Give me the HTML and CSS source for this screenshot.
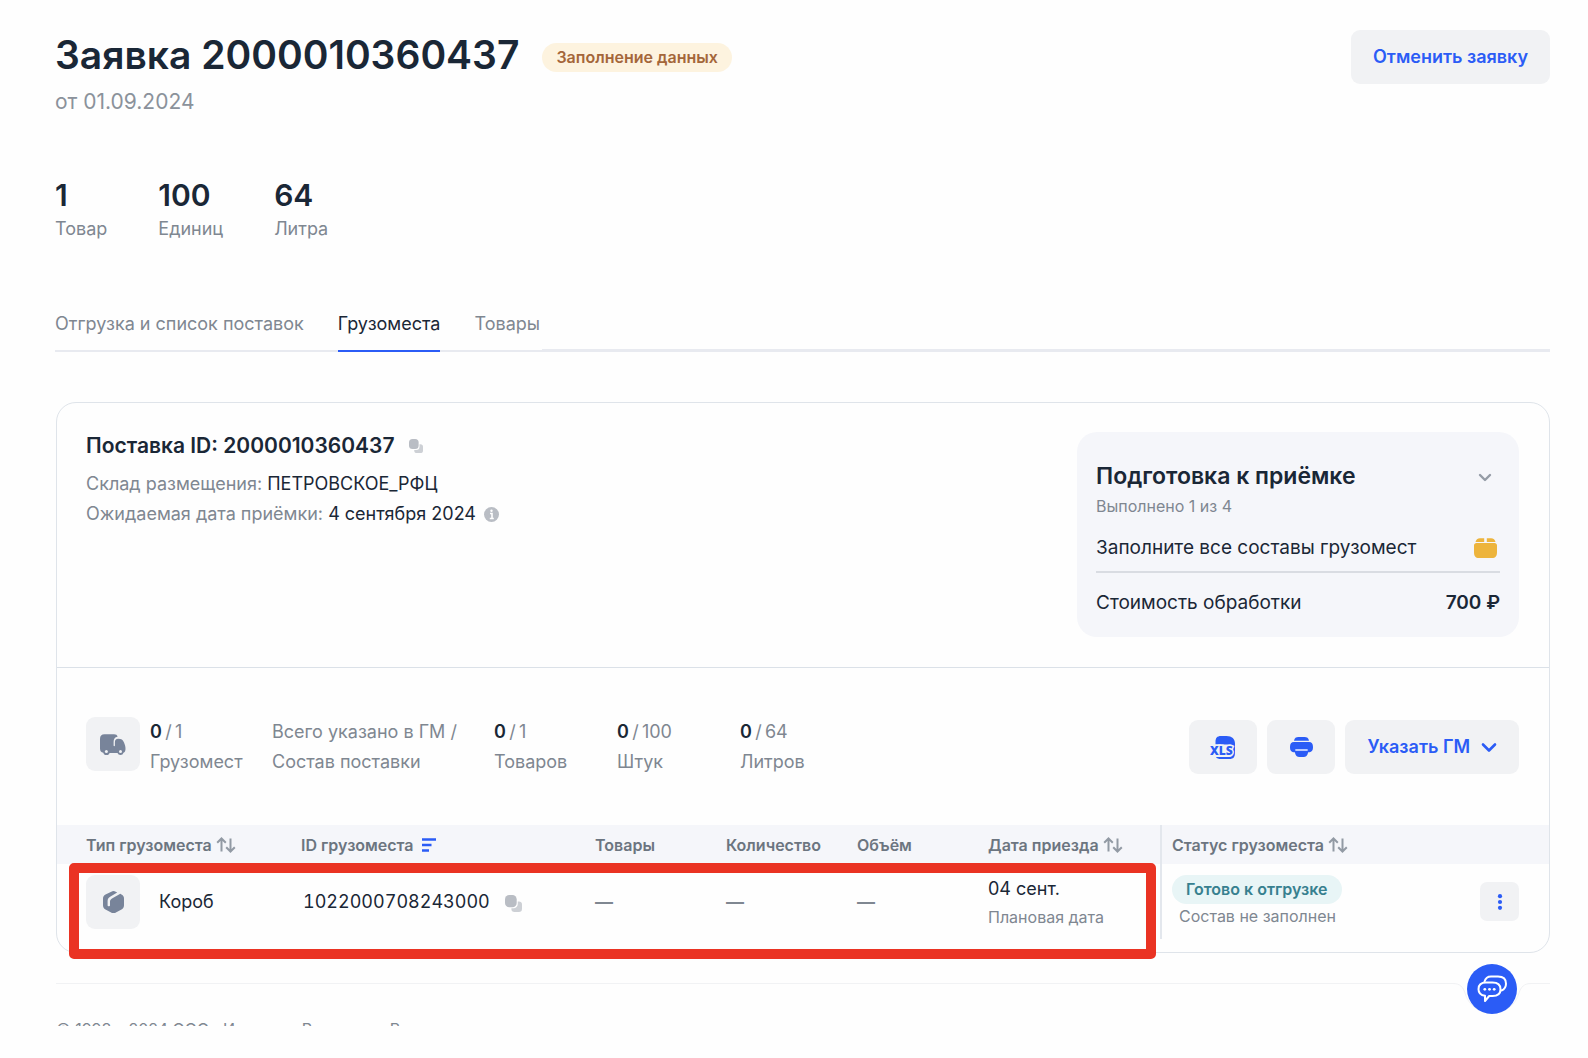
FILE: index.html
```html
<!DOCTYPE html>
<html lang="ru">
<head>
<meta charset="utf-8">
<meta name="viewport" content="width=device-width, initial-scale=1">
<title>Заявка 2000010360437</title>
<link rel="stylesheet" href="styles.css">
</head>
<body>
<svg class="sprite" aria-hidden="true">
  <symbol id="copy" viewBox="0 0 16 16">
    <rect x="6" y="6" width="10" height="10" rx="3" fill="#cdd0d5"/>
    <rect x="0" y="0" width="12" height="12.500" rx="4" fill="#fff"/>
    <rect x="0" y="0" width="11" height="11.500" rx="4" fill="#b9bdc4"/>
  </symbol>
  <symbol id="sort" viewBox="0 0 20 16">
    <path d="M5.500 14.500V2M1.200 5.800 5.500 1.500l4.300 4.300M14.500 1.500V14M10.200 10.200l4.300 4.300 4.300-4.300" fill="none" stroke="#929aa4" stroke-width="2"/>
  </symbol>
</svg>
<div class="page">
  <header class="head">
    <div>
      <div class="title-row">
        <h1>Заявка 2000010360437</h1>
        <span class="pill pill-warn">Заполнение данных</span>
      </div>
      <p class="date">от 01.09.2024</p>
    </div>
    <button class="btn" type="button">Отменить заявку</button>
  </header>

  <dl class="totals">
    <div><dd>1</dd><dt>Товар</dt></div>
    <div><dd>100</dd><dt>Единиц</dt></div>
    <div><dd>64</dd><dt>Литра</dt></div>
  </dl>

  <nav class="tabs">
    <a href="#shipment">Отгрузка и список поставок</a>
    <a href="#cargo" class="active" aria-current="page">Грузоместа</a>
    <a href="#goods">Товары</a>
  </nav>

  <main class="card">
    <section class="supply">
      <div>
        <h2>Поставка ID: 2000010360437
          <button class="icon-btn" type="button" aria-label="Скопировать"><svg width="14" height="14"><use href="#copy"/></svg></button>
        </h2>
        <p>Склад размещения: <b>ПЕТРОВСКОЕ_РФЦ</b></p>
        <p>Ожидаемая дата приёмки: <b>4 сентября 2024</b>
          <svg class="info" width="15" height="15" viewBox="0 0 15 15"><circle cx="7.500" cy="7.500" r="7.500" fill="#b9bdc4"/><path d="M6 6.500h2v5M5.800 11.500h4" stroke="#fff" stroke-width="1.600" fill="none"/><circle cx="7.500" cy="3.800" r="1.200" fill="#fff"/></svg>
        </p>
      </div>
      <aside class="prep">
        <div class="prep-row">
          <h3>Подготовка к приёмке</h3>
          <button class="icon-btn chevron" type="button" aria-label="Развернуть"><svg width="14" height="10" viewBox="0 0 14 10"><path d="M2 2l5 5 5-5" fill="none" stroke="#959ca6" stroke-width="2.400" stroke-linecap="round" stroke-linejoin="round"/></svg></button>
        </div>
        <p class="progress">Выполнено 1 из 4</p>
        <div class="prep-row step">
          <span>Заполните все составы грузомест</span>
          <svg class="box" width="23" height="20" viewBox="0 0 23 20"><path d="M1.500 4C2 1.500 3.500.2 6 .2h4.200V4zM12.800.2H17c2.500 0 4 1.300 4.500 3.800h-8.700zM2.500 5h18c1.500 0 2.500 1 2.500 2.500V14c0 4-1.500 6-5 6H5c-3.500 0-5-2-5-6V7.500C0 6 1 5 2.500 5z" fill="#edb43c"/></svg>
        </div>
        <hr>
        <div class="prep-row">
          <span>Стоимость обработки</span>
          <strong>700 ₽</strong>
        </div>
      </aside>
    </section>

    <section class="toolbar">
      <span class="tile"><svg width="26" height="21" viewBox="0 0 26 21"><path d="M4.500.3H14c2 0 3.300.8 3.600 2.500C14.600 3.200 13.600 5 13.600 8v3.500c0 .9 1.300.9 1.300 0V8.300c0-2.300 1-3.500 3.300-3.500 3.300 0 4.600 1 5.800 3.700C25 10.800 25.500 12.500 25.500 15c0 2-.7 3.200-2 3.700a3.200 3.200 0 0 1-6 .3H9.600a3.300 3.300 0 0 1-6.300-.2C1.200 18.300 0 17 0 14.500V5C0 1.800 1.500.3 4.500.3z" fill="#78849a"/><circle cx="6.400" cy="17.600" r="1.500" fill="#f1f2f4"/><circle cx="20.500" cy="17.600" r="1.500" fill="#f1f2f4"/></svg></span>
      <div class="metric m-cargo"><div><b>0</b>&#8201;/&#8201;1</div><div>Грузомест</div></div>
      <div class="metric m-note"><div>Всего указано в ГМ /</div><div>Состав поставки</div></div>
      <div class="metric"><div><b>0</b>&#8201;/&#8201;1</div><div>Товаров</div></div>
      <div class="metric"><div><b>0</b>&#8201;/&#8201;100</div><div>Штук</div></div>
      <div class="metric"><div><b>0</b>&#8201;/&#8201;64</div><div>Литров</div></div>
      <div class="actions">
        <button class="btn btn-icon" type="button" aria-label="Скачать XLS"><svg width="26" height="23" viewBox="0 0 26 23"><path d="M5.500 8.500V6c0-4 1.500-6 5.500-6h5.500c5.500 0 8.500 3 8.500 7.500v9c0 4.500-1.500 6.500-5.500 6.500h-8c-3 0-4.800-.6-5.500-2H19c2.500 0 3.500-.8 3.500-3V11c0-1.800-.8-2.500-2.500-2.500z" fill="#2b5cf6"/><text x="0" y="18.500" class="xls">XLS</text></svg></button>
        <button class="btn btn-icon" type="button" aria-label="Печать"><svg width="23" height="20" viewBox="0 0 23 20"><path d="M4 3.800C4.500 1 6 0 8.500 0h6C17 0 18.500 1 19 3.800zM4 5h15c2.700 0 4 1.800 4 5 0 3.800-1.300 5.200-4.800 5.200C17.400 18.500 16 20 13.500 20h-4C7 20 5.600 18.500 4.800 15.200 1.300 15.200 0 13.800 0 10c0-3.200 1.300-5 4-5z" fill="#2b5cf6"/><path d="M6 13h11" stroke="#b9caff" stroke-width="1.800" stroke-linecap="round"/></svg></button>
        <button class="btn" type="button">Указать ГМ <svg width="16" height="11" viewBox="0 0 16 11"><path d="M2 2.500l6 6 6-6" fill="none" stroke="#2b5cf6" stroke-width="2.600" stroke-linecap="round" stroke-linejoin="round"/></svg></button>
      </div>
    </section>

    <div class="table-wrap">
      <table>
        <colgroup><col class="c-type"><col class="c-id"><col class="c-num"><col class="c-num"><col class="c-num"><col class="c-date"><col></colgroup>
        <thead>
          <tr>
            <th>Тип грузоместа <svg width="20" height="16"><use href="#sort"/></svg></th>
            <th>ID грузоместа <svg class="filter" width="16" height="14" viewBox="0 0 16 14"><path d="M1 1.500h14M1 7h9.500M1 12.500h7" stroke="#2b5cf6" stroke-width="2.400"/></svg></th>
            <th>Товары</th>
            <th>Количество</th>
            <th>Объём</th>
            <th>Дата приезда <svg width="20" height="16"><use href="#sort"/></svg></th>
            <th>Статус грузоместа <svg width="20" height="16"><use href="#sort"/></svg></th>
          </tr>
        </thead>
        <tbody>
          <tr>
            <td><div class="type"><span class="tile"><svg width="21" height="22" viewBox="0 0 21 22"><path d="M8.300.7a4.500 4.500 0 0 1 4.400 0l1.500.9-6.700 4C5.300 6.900 4.600 8 4.600 10.300v4.200c0 1 2.400 1 2.400 0v-3.700c0-1.700.5-2.500 2-3.400l8.300-4.600 1.200.8C20.300 4.700 21 5.700 21 7.800v6.400c0 2-.8 3.200-2.500 4.200l-5.600 3a5 5 0 0 1-4.800 0l-5.600-3C.8 17.400 0 16.200 0 14.200V7.800c0-2 .8-3.200 2.500-4.200z" fill="#78849a"/></svg></span>Короб</div></td>
            <td class="id">1022000708243000 <button class="icon-btn" type="button" aria-label="Скопировать"><svg width="17" height="17"><use href="#copy"/></svg></button></td>
            <td class="dash">—</td>
            <td class="dash">—</td>
            <td class="dash">—</td>
            <td><div class="arrival">04 сент.</div><div class="sub">Плановая дата</div></td>
            <td>
              <div class="status">
                <div><span class="pill pill-ok">Готово к отгрузке</span><div class="sub">Состав не заполнен</div></div>
                <button class="more" type="button" aria-label="Ещё"><svg width="6" height="16" viewBox="0 0 6 16"><g fill="#2b5cf6"><circle cx="3" cy="2.200" r="2.100"/><circle cx="3" cy="8" r="2.100"/><circle cx="3" cy="13.800" r="2.100"/></g></svg></button>
              </div>
            </td>
          </tr>
        </tbody>
      </table>
      <div class="highlight"></div>
    </div>
  </main>

  <footer class="foot">
    <p>© 1998 – 2024 ООО «Интернет Решения». Все</p>
    <button class="chat" type="button" aria-label="Чат"><svg width="84" height="40" viewBox="0 0 84 40" class="notch"><path d="M0 0H84V2.500H81C74 2.500 71 6 69 12A28 28 0 0 1 15 12C13 6 10 2.500 3 2.500H0z" fill="#fefefe"/><path d="M0 2.500H3C10 2.500 13 6 15 12A28 28 0 0 0 69 12C71 6 74 2.500 81 2.500H84" fill="none" stroke="#f1f2f4"/></svg><span class="disc"><svg width="30" height="28" viewBox="0 0 30 28"><g fill="none" stroke="#fff" stroke-width="2" stroke-linejoin="round" stroke-linecap="round"><path d="M7.500 6.500C8.500 3.200 10.500 1.500 14 1.500h7c5 0 8 2.700 8 7.200 0 3.300-1.600 5.600-4.500 6.800"/><path d="M9 7.500h6.500c5 0 8 2.500 8 6.700s-3 6.800-8 6.800h-3.300L8 26v-5.200c-4-.6-6.500-2.900-6.500-6.600 0-4.200 2.700-6.700 7.500-6.700z"/></g><g fill="#fff"><circle cx="7.800" cy="14.300" r="1.400"/><circle cx="12.500" cy="14.300" r="1.400"/><circle cx="17.200" cy="14.300" r="1.400"/></g></svg></span></button>
  </footer>
</div>
</body>
</html>
```
FILE: styles.css
```css
* { box-sizing: border-box; }
body {
  margin: 0;
  background: #fefefe;
  color: #1a2736;
  font: 400 18px/28px Inter, "Liberation Sans", sans-serif;
}
h1, h2, h3, p, dl, dd { margin: 0; }
button { border: 0; font: inherit; padding: 0; cursor: pointer; }
.sprite { position: absolute; width: 0; height: 0; }
.page { padding: 30px 38px 0 55px; }

.head { display: flex; justify-content: space-between; align-items: flex-start; }
.title-row { display: flex; align-items: center; gap: 23px; }
h1 { font-size: 39px; line-height: 50px; font-weight: 600; }
.date { margin-top: 8px; font-size: 21px; color: #8b929b; }
.pill { display: inline-block; padding: 0 14px; border-radius: 15px; font-size: 16px; line-height: 29px; font-weight: 600; white-space: nowrap; }
.pill-warn { margin-top: 5px; background: #fdf3df; color: #a4663a; }
.pill-ok { background: #e8f5f6; color: #37808f; }
.btn {
  display: inline-flex; align-items: center; justify-content: center; gap: 11px;
  height: 54px; padding: 0 22px; border-radius: 9px;
  background: #f1f2f4; color: #2b5cf6; font-weight: 600; white-space: nowrap;
}
.btn-icon { width: 68px; padding: 0; }
.icon-btn { display: inline-flex; background: none; }

.totals { display: flex; gap: 51px; margin-top: 60px; }
.totals div { display: flex; flex-direction: column; }
.totals dd { font-size: 30px; line-height: 38px; font-weight: 600; }
.totals dt { margin-top: 1px; color: #7f8791; }

.tabs { display: flex; gap: 34px; margin-top: 67px; background: linear-gradient(#e8eaf0, #e8eaf0) bottom / 100% 2px no-repeat; }
.tabs a { padding-bottom: 12px; border-bottom: 2px solid #e8eaf0; color: #7f8791; text-decoration: none; white-space: nowrap; }
.tabs a.active { border-color: #2b5cf6; color: #1a2736; }
.tabs::after { content: ""; flex: 1; margin-left: -32px; border-bottom: 3px solid #e8eaf0; }

.card { margin: 50px 0 0 1px; padding-bottom: 13px; border: 1px solid #dfe4ea; border-radius: 20px; }
.supply { display: flex; justify-content: space-between; align-items: flex-start; padding: 29px 30px 30px 29px; border-bottom: 1px solid #dbe1e8; }
.supply h2 { display: flex; align-items: center; gap: 14px; margin-bottom: 9px; font-size: 21px; line-height: 28px; font-weight: 600; }
.supply p { line-height: 30px; color: #7f8791; }
.supply p b { font-weight: 400; color: #1a2736; }
.info { margin-left: 3px; vertical-align: -2px; }
.prep { width: 442px; padding: 28px 19px 18px; border-radius: 20px; background: #f5f6fa; font-size: 19px; }
.prep-row { display: flex; justify-content: space-between; align-items: center; line-height: 32px; }
.prep h3 { font-size: 23px; font-weight: 600; }
.prep strong { font-weight: 600; }
.chevron { margin: 3px 8px 0 0; }
.prep .progress { margin-top: 2px; font-size: 16px; line-height: 24px; }
.step { margin-top: 14px; }
.box { margin-right: 3px; }
.prep hr { margin: 7px 0 14px; border: 0; border-top: 2px solid #d9dce2; }

.toolbar { display: flex; align-items: center; padding: 49px 30px 48px 29px; color: #7f8791; line-height: 30px; white-space: nowrap; }
.tile { display: flex; align-items: center; justify-content: center; width: 54px; height: 54px; border-radius: 9px; background: #f1f2f4; }
.toolbar .tile { align-self: flex-start; margin-right: 10px; }
.metric { width: 123px; }
.metric b { color: #1a2736; font-weight: 600; }
.m-cargo { width: 122px; }
.m-note { width: 222px; }
.actions { display: flex; gap: 10px; margin-left: auto; }
.xls { font: 800 12px "Open Sans", sans-serif; fill: #2b5cf6; stroke: #f1f2f4; stroke-width: 3px; paint-order: stroke; }

.table-wrap { position: relative; }
table { width: 100%; border-collapse: collapse; table-layout: fixed; text-align: left; }
.c-type { width: 244px; }
.c-id { width: 294px; }
.c-num { width: 131px; }
.c-date { width: 173px; }
th, td { padding: 0; white-space: nowrap; }
th { height: 39px; background: #f5f6fa; color: #6c7580; font-size: 16px; line-height: 24px; font-weight: 600; }
th svg { vertical-align: -2px; }
th .filter { margin-left: 3px; vertical-align: -1px; }
td { height: 75px; }
th:first-child, td:first-child { padding-left: 29px; }
th:last-child, td:last-child { border-left: 2px solid #e3e7ed; padding: 0 30px 0 10px; }
.type { display: flex; align-items: center; gap: 19px; }
.id { padding-left: 2px; font-variant-numeric: tabular-nums; }
.id .icon-btn { margin-left: 10px; vertical-align: -4px; }
.dash { color: #7f8791; font-weight: 600; }
.arrival { padding-top: 2px; }
.sub { font-size: 16px; color: #7f8791; }
.status { display: flex; align-items: center; justify-content: space-between; }
.status .sub { padding-left: 7px; line-height: 25px; }
.status .pill { display: block; }
.more { display: flex; align-items: center; justify-content: center; width: 39px; height: 39px; border-radius: 7px; background: #f1f2f4; }
.highlight { position: absolute; left: 12px; right: 393px; top: 38px; bottom: -20px; border: 10px solid #ea3323; border-radius: 5px; pointer-events: none; }

.foot { position: relative; margin: 30px 0 0 1px; padding-top: 35px; border-top: 1px solid #f1f2f4; }
.foot p { height: 7px; overflow: hidden; font-size: 16px; line-height: 20px; color: #7f8791; }
.chat { position: absolute; right: 16px; top: -3px; width: 84px; height: 40px; background: none; }
.notch { display: block; }
.disc { position: absolute; left: 17px; top: -17px; display: flex; align-items: center; justify-content: center; width: 50px; height: 50px; border-radius: 50%; background: #2b5cf6; }
```
